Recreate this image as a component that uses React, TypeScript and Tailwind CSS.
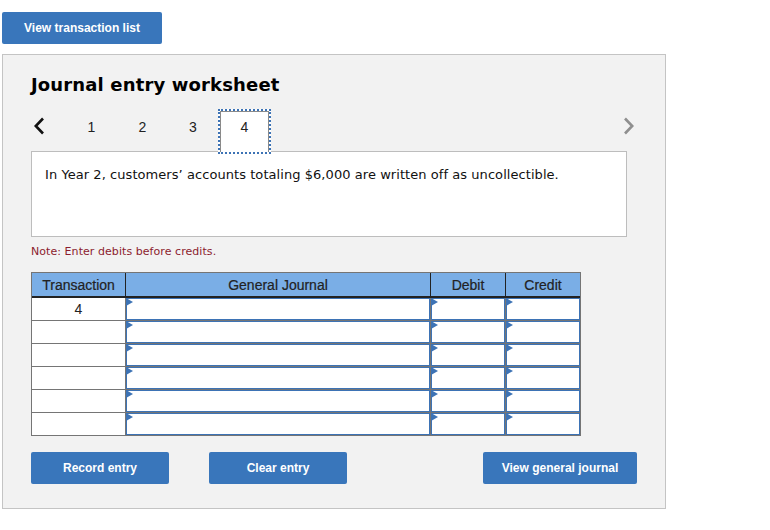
const rows = ["4", "", "", "", "", ""];

function Button({ label, className }: { label: string; className: string }) {
  return (
    <button className={"h-8 rounded-[2px] bg-[#3976bb] text-center text-[12px] font-bold text-white " + className}>
      {label}
    </button>
  );
}

function EntryCell({ width, last }: { width: string; last?: boolean }) {
  return (
    <div className={"h-full border-b border-[#757575] " + width + (last ? "" : " border-r")}>
      <div className="relative h-full border border-[#3d73b5] bg-white">
        <svg className="absolute -left-px -top-px" width="7" height="8" viewBox="0 0 7 8">
          <path d="M0 0L7 4L0 8Z" fill="#3d73b5" />
        </svg>
      </div>
    </div>
  );
}

export default function App() {
  return (
    <div className="h-[530px] w-[770px] bg-white pl-[2px] pt-3 font-['Liberation_Sans',sans-serif]">
      <Button label="View transaction list" className="block w-40" />
      <div className="mt-[10px] h-[455px] w-[664px] border border-[#c4c4c4] bg-[#f2f2f2] pl-7 pr-[38px] pt-[18px]">
        <h1 className="font-['DejaVu_Sans',sans-serif] text-[18px] font-bold leading-6 tracking-[0.15px] text-black">
          Journal entry worksheet
        </h1>
        <div className="relative mt-[12px] flex h-[45px] text-[14px] leading-[36px] text-[#222]">
          <svg className="ml-[2px] mt-[8px]" width="12" height="18" viewBox="0 0 12 18" fill="none">
            <path d="M10 1.5L2.8 9L10 16.5" stroke="#111" strokeWidth="2.6" />
          </svg>
          <div className="ml-[21px] flex">
            <span className="w-[51px] text-center">1</span>
            <span className="w-[51px] text-center">2</span>
            <span className="w-[50px] text-center">3</span>
            <span className="h-[45px] w-[53px] border-2 border-dotted border-[#3d73b5] bg-white">
              <span className="block h-full border-x border-t border-[#8a8a8a] text-center leading-[31px]">4</span>
            </span>
          </div>
          <svg className="-mr-[8px] ml-auto mt-[8px]" width="12" height="18" viewBox="0 0 12 18" fill="none">
            <path d="M2 1.5L9.2 9L2 16.5" stroke="#8f8f8f" strokeWidth="2.6" />
          </svg>
        </div>
        <div className="-mt-[3px] h-[86px] w-[596px] border border-[#bdbdbd] bg-white px-[13px] py-[14px] font-['DejaVu_Sans',sans-serif] text-[13px] leading-[18px] tracking-[0.06px] text-[#111]">
          In Year 2, customers’ accounts totaling $6,000 are written off as uncollectible.
        </div>
        <p className="mt-[8px] font-['DejaVu_Sans',sans-serif] text-[11px] leading-[14px] tracking-[0.06px] text-[#8c1c2e]">
          Note: Enter debits before credits.
        </p>
        <div className="mt-[13px] w-[550px] border-x border-t border-[#757575]">
          <div className="flex h-[25px] border-b-2 border-[#222] bg-[#7aaee6] text-center text-[14px] leading-[24px] text-[#222] [-webkit-text-stroke:0.2px_#222]">
            <div className="w-[94px] border-r border-[#222]">Transaction</div>
            <div className="w-[305px] border-r border-[#222]">General Journal</div>
            <div className="w-[75px] border-r border-[#222]">Debit</div>
            <div className="flex-1">Credit</div>
          </div>
          {rows.map((r, i) => (
            <div key={i} className="flex h-[23px] bg-white">
              <div className="w-[94px] border-b border-r border-[#757575] text-center text-[14px] leading-[22px] text-[#222]">
                {r}
              </div>
              <EntryCell width="w-[305px]" />
              <EntryCell width="w-[75px]" />
              <EntryCell width="flex-1" last />
            </div>
          ))}
        </div>
        <div className="mt-[16px] flex w-[606px]">
          <Button label="Record entry" className="w-[138px]" />
          <Button label="Clear entry" className="ml-10 w-[138px]" />
          <Button label="View general journal" className="ml-auto w-[154px]" />
        </div>
      </div>
    </div>
  );
}
